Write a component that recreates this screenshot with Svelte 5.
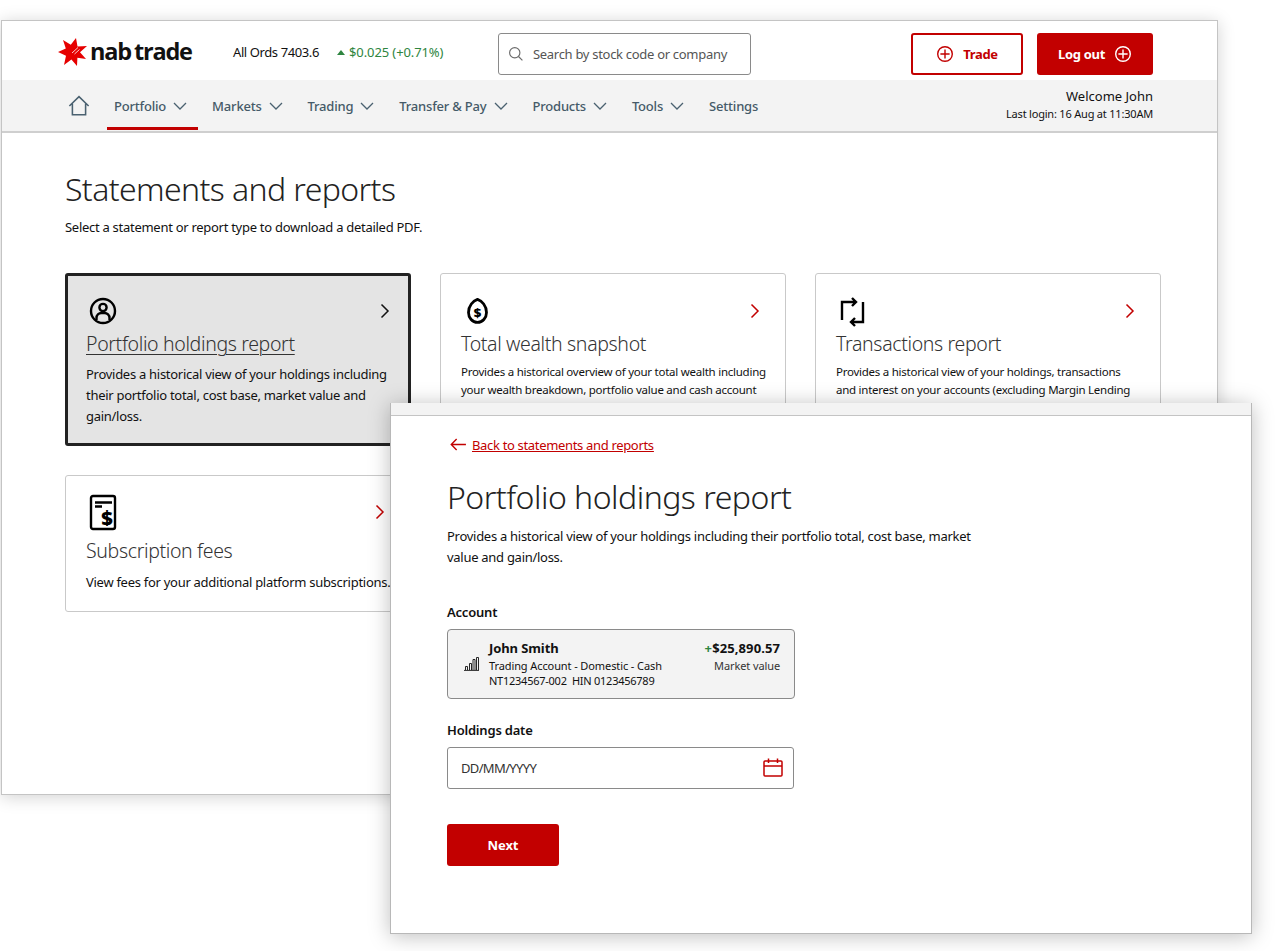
<script>
  const nav = [
    { label: 'Portfolio', chevron: true, active: true },
    { label: 'Markets', chevron: true },
    { label: 'Trading', chevron: true },
    { label: 'Transfer & Pay', chevron: true },
    { label: 'Products', chevron: true },
    { label: 'Tools', chevron: true },
    { label: 'Settings', chevron: false }
  ];
  const cards = [
    { id: 'person', title: 'Portfolio holdings report', selected: true, text: 'Provides a historical view of your holdings including their portfolio total, cost base, market value and gain/loss.' },
    { id: 'wealth', title: 'Total wealth snapshot', text: 'Provides a historical overview of your total wealth including your wealth breakdown, portfolio value and cash account balances.' },
    { id: 'swap', title: 'Transactions report', text: 'Provides a historical view of your holdings, transactions and interest on your accounts (excluding Margin Lending accounts).' },
    { id: 'fees', title: 'Subscription fees', short: true, text: 'View fees for your additional platform subscriptions.' }
  ];
</script>

{#snippet plus()}
  <svg class="plus" viewBox="0 0 18 18" fill="none" stroke="currentColor" stroke-width="1.4"><circle cx="9" cy="9" r="7.3"/><path d="M9 4.4v9.2M4.4 9h9.2"/></svg>
{/snippet}

<div class="stage">
  <section class="win back">
    <header class="top">
      <div class="logo">
        <svg class="star" viewBox="0 0 30 29"><path fill="#e60000" d="M18 0L19.500 8.400 29 8 22 14.300 28 21 19.400 19.700 19 28 13.400 21.400 6 27 8 17.700 0 14 7.800 10.600 5 2 12.800 6.700z"/><path d="M14 15l6-5.500M16.500 16l5-4.500" stroke="#fff" stroke-width=".8" fill="none"/></svg>
        <span class="word">nab<i>trade</i></span>
      </div>
      <div class="ords">All Ords 7403.6</div>
      <div class="change"><span class="tri"></span>$0.025 (+0.71%)</div>
      <div class="search">
        <svg viewBox="0 0 18 18" fill="none" stroke="#6b6b6b" stroke-width="1.3"><circle cx="7.6" cy="7.6" r="5.8"/><path d="M11.8 11.8l4.4 4.4"/></svg>
        <span>Search by stock code or company</span>
      </div>
      <div class="actions">
        <button class="btn outline">{@render plus()}<span>Trade</span></button>
        <button class="btn solid"><span>Log out</span>{@render plus()}</button>
      </div>
    </header>
    <nav class="nav">
      <svg class="home" viewBox="0 0 24 24" fill="none" stroke="#4a6170" stroke-width="1.7"><path d="M1.500 12L12 1.800 22.500 12M4.800 9.500V21.500h14.400V9.500"/></svg>
      <ul>
        {#each nav as item}
          <li class:active={item.active}>
            {item.label}
            {#if item.chevron}
              <svg viewBox="0 0 14 8" fill="none" stroke="#4a6170" stroke-width="1.3"><path d="M1 1l6 6 6-6"/></svg>
            {/if}
          </li>
        {/each}
      </ul>
      <div class="welcome">
        <div>Welcome John</div>
        <small>Last login: 16 Aug at 11:30AM</small>
      </div>
    </nav>
    <main class="page">
      <h1>Statements and reports</h1>
      <p class="lead">Select a statement or report type to download a detailed PDF.</p>
      <div class="grid">
        {#each cards as card}
          <article class="card" class:selected={card.selected} class:short={card.short}>
            <div class="card-head">
              <svg class="ico" viewBox="0 0 34 34" fill="none" stroke="#000" stroke-width="2.4">
                {#if card.id === 'person'}
                  <circle cx="17" cy="17" r="12"/><circle cx="17" cy="13.500" r="3.600"/><path d="M10.500 26v-2a5 5 0 0 1 5-5h3a5 5 0 0 1 5 5v2"/>
                {:else if card.id === 'wealth'}
                  <path stroke-width="2.800" d="M16.500 5.400c4.500 1.500 9 6.500 9 13 0 5.500-4 10-9 10s-9-4.500-9-10c0-6.500 4.500-11.500 9-13z"/>
                  <text x="16.500" y="23" class="dollar" text-anchor="middle">$</text>
                {:else if card.id === 'swap'}
                  <path d="M6 26V8h13M16 4l4 4-4 4M27 8v20H16M19 24l-4 4 4 4"/>
                {:else}
                  <rect x="5" y="1" width="24" height="33" rx="2"/>
                  <path d="M9 7.500h17M9 11.500h7"/>
                  <text x="21" y="30" class="dollar big" text-anchor="middle">$</text>
                {/if}
              </svg>
              <svg class="chev" viewBox="0 0 10 16" fill="none" stroke-width="1.5"><path d="M1.500 1.500l6.500 6.500-6.500 6.500"/></svg>
            </div>
            <h2>{card.title}</h2>
            <p>{card.text}</p>
          </article>
        {/each}
      </div>
    </main>
  </section>

  <section class="win front">
    <div class="strip"></div>
    <div class="form">
      <a class="backlink" href="#top">
        <svg viewBox="0 0 18 14" fill="none" stroke="#c20000" stroke-width="1.5"><path d="M7 1L1.200 7 7 13M1.200 7H17"/></svg>
        <span>Back to statements and reports</span>
      </a>
      <h1>Portfolio holdings report</h1>
      <p class="intro">Provides a historical view of your holdings including their portfolio total, cost base, market value and gain/loss.</p>
      <div class="label first">Account</div>
      <div class="account">
        <svg viewBox="0 0 15 14" fill="none" stroke="#111" stroke-width=".9"><path d="M0 13.400h15M1.500 13V9.500h2V13M5.500 13V6.500h2V13M9 13V2.500h2V13M12.500 13V.5h2V13"/></svg>
        <div class="acc-main">
          <strong>John Smith</strong>
          <div>Trading Account - Domestic - Cash</div>
          <div class="ids">NT1234567-002&nbsp; HIN 0123456789</div>
        </div>
        <div class="acc-val">
          <strong><em>+</em>$25,890.57</strong>
          <div>Market value</div>
        </div>
      </div>
      <div class="label second">Holdings date</div>
      <div class="date">
        <span>DD/MM/YYYY</span>
        <svg viewBox="0 0 20 20" fill="none" stroke="#c20000" stroke-width="1.500"><rect x="1" y="3" width="18" height="15" rx="1"/><path d="M1 8h18M5.500 0.500V5M14.500 0.500V5"/></svg>
      </div>
      <button class="next">Next</button>
    </div>
  </section>
</div>

<style>
  :global(body) { margin: 0; background: #fff; }
  .stage {
    position: relative;
    width: 1280px;
    height: 951px;
    overflow: hidden;
    font-family: "Noto Sans", sans-serif;
    color: #111;
  }
  .win { position: absolute; background: #fff; box-sizing: border-box; border: 1px solid #c4c4c4; overflow: hidden; }
  .back { left: 1px; top: 20px; width: 1217px; height: 775px; box-shadow: 0 2px 16px rgba(0,0,0,.18); }
  .front { left: 390px; top: 403px; width: 862px; height: 531px; border-top: 0; border-color: #b8b8b8; box-shadow: 0 2px 20px rgba(0,0,0,.26); }

  .top { display: flex; align-items: center; height: 59px; padding-left: 56px; }
  .logo { display: flex; align-items: center; width: 175px; margin-top: 3px; }
  .star { width: 30px; height: 29px; }
  .word { font-family: "Open Sans", sans-serif; font-weight: 700; font-size: 23.5px; letter-spacing: -1.2px; color: #111; margin-left: 2px; line-height: 1; }
  .word i { font-style: normal; margin-left: 3px; }
  .ords { font-size: 13px; letter-spacing: -.4px; width: 104px; margin-top: 3px; }
  .change { font-size: 13px; letter-spacing: -.1px; color: #2e8540; width: 161px; display: flex; align-items: center; margin-top: 3px; }
  .tri { width: 0; height: 0; border-left: 4px solid transparent; border-right: 4px solid transparent; border-bottom: 5px solid #2e8540; margin-right: 4px; }
  .search { width: 253px; height: 42px; margin-top: 7px; box-sizing: border-box; border: 1px solid #8a8a8a; border-radius: 3px; display: flex; align-items: center; padding-left: 9px; gap: 9px; color: #555; font-size: 13px; letter-spacing: -.3px; }
  .search svg { width: 16px; height: 16px; }
  .actions { margin-left: auto; margin-right: 64px; margin-top: 7px; display: flex; gap: 14px; }
  .btn { height: 42px; border-radius: 3px; box-sizing: border-box; font: 700 13px "Noto Sans", sans-serif; letter-spacing: -.3px; display: flex; align-items: center; justify-content: center; gap: 9px; padding: 0; }
  .outline { width: 112px; background: #fff; border: 2px solid #c20000; color: #c20000; }
  .solid { width: 116px; background: #c20000; border: 0; color: #fff; }
  .plus { width: 18px; height: 18px; }

  .nav { display: flex; align-items: stretch; height: 53px; background: #f3f3f3; border-bottom: 2px solid #cfcfcf; box-sizing: border-box; padding-left: 66px; }
  .home { width: 22px; height: 22px; align-self: center; margin-right: 17px; }
  .nav ul { display: flex; list-style: none; margin: 0; padding: 0; }
  .nav li { display: flex; align-items: center; gap: 7px; font-size: 13px; font-weight: 500; letter-spacing: -.2px; color: #455a68; padding: 0 11px 0 7px; margin-right: 7px; box-sizing: border-box; position: relative; }
  .nav li svg { width: 14px; height: 8px; }
  .nav li.active::after { content: ""; position: absolute; left: 0; right: 0; bottom: 1px; height: 3px; background: #c20000; }
  .welcome { margin-left: auto; margin-right: 64px; margin-top: -2px; text-align: right; align-self: center; font-size: 13px; line-height: 17px; }
  .welcome small { font-size: 11px; letter-spacing: -.2px; display: block; }

  .page { padding: 36px 0 0 63px; }
  h1 { margin: 0; font-weight: 300; font-size: 32px; letter-spacing: -.6px; line-height: 40px; color: #222; }
  .lead { margin: 9px 0 0; font-size: 13px; letter-spacing: -.28px; line-height: 18px; }
  .grid { display: grid; grid-template-columns: repeat(3, 346px); grid-template-rows: 173px 137px; column-gap: 29px; row-gap: 29px; margin-top: 37px; }
  .card { border: 1px solid #c9c9c9; border-radius: 3px; padding: 22px 0 0 20px; box-sizing: border-box; overflow: hidden; background: #fff; }
  .card.selected { background: #e4e4e4; border: 3px solid #222; padding: 20px 0 0 18px; }
  .card-head { display: flex; justify-content: space-between; align-items: center; height: 30px; padding-right: 25px; }
  .selected .card-head { padding-right: 18px; }
  .short .card-head { margin-top: -1px; }
  .ico { width: 34px; height: 34px; overflow: visible; }
  .dollar { font: 800 13px "Open Sans", sans-serif; fill: #000; stroke: none; }
  .dollar.big { font-size: 20px; }
  .chev { width: 10px; height: 16px; stroke: #c20000; }
  .selected .chev { stroke: #111; }
  .card h2 { margin: 2px 0 0; font-weight: 300; font-size: 19.5px; letter-spacing: -.35px; line-height: 32px; color: #333; }
  .short h2 { margin-top: 8px; }
  .selected h2 { text-decoration: underline; text-decoration-thickness: 1px; text-underline-offset: 3px; }
  .card p { margin: 3px 0 0; width: 306px; font-size: 11.5px; letter-spacing: -.25px; line-height: 18px; }
  .selected p { font-size: 13px; line-height: 21px; letter-spacing: -.28px; margin-top: 4px; }
  .short p { font-size: 13px; letter-spacing: -.28px; margin-top: 6px; width: 320px; }

  .strip { height: 12px; background: #f3f3f3; border-bottom: 1px solid #c4c4c4; }
  .form { padding: 20px 0 0 56px; }
  .backlink { display: flex; align-items: center; gap: 5px; color: #c20000; font-size: 13px; letter-spacing: -.33px; margin-left: 3px; line-height: 18px; }
  .backlink svg { width: 17px; height: 13px; margin-top: -2px; }
  .backlink span { text-decoration: underline; }
  .form h1 { margin-top: 21px; letter-spacing: -.5px; line-height: 44px; }
  .intro { margin: 7px 0 0; width: 540px; font-size: 13px; letter-spacing: -.28px; line-height: 21px; }
  .label { font-size: 13px; font-weight: 600; letter-spacing: -.2px; line-height: 18px; }
  .first { margin-top: 35px; }
  .second { margin-top: 22px; }
  .account { width: 348px; height: 70px; margin-top: 8px; box-sizing: border-box; background: #f3f3f3; border: 1px solid #8a8a8a; border-radius: 4px; display: flex; align-items: center; padding: 0 14px 0 16px; font-size: 11px; letter-spacing: -.1px; line-height: 15px; }
  .account > svg { width: 15px; height: 14px; margin-right: 10px; }
  .acc-main { flex: 1; align-self: flex-start; padding-top: 10px; }
  .ids { letter-spacing: -.25px; }
  .account strong { font-size: 13px; line-height: 16px; margin-bottom: 2px; font-weight: 700; display: block; }
  .acc-val { text-align: right; align-self: flex-start; padding-top: 10px; color: #333; }
  .acc-val strong { color: #111; letter-spacing: .1px; }
  .acc-val em { color: #2e8540; font-style: normal; }
  .date { width: 347px; height: 42px; margin-top: 8px; box-sizing: border-box; border: 1px solid #8a8a8a; border-radius: 3px; display: flex; align-items: center; justify-content: space-between; padding: 0 10px 0 13px; font-size: 13px; letter-spacing: -.65px; color: #333; }
  .date svg { width: 20px; height: 20px; }
  .next { display: block; margin-top: 35px; width: 112px; height: 42px; border: 0; border-radius: 3px; background: #c20000; color: #fff; font: 700 13px "Noto Sans", sans-serif; letter-spacing: -.1px; }
</style>
